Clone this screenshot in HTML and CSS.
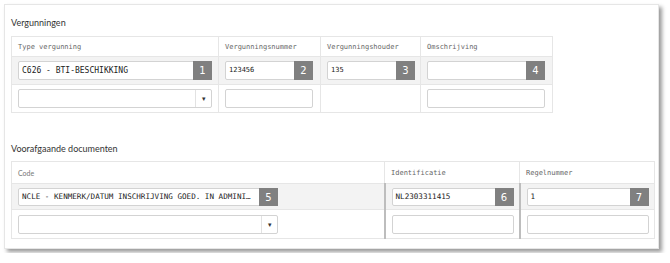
FILE: index.html
```html
<!DOCTYPE html>
<html>
    <head>
        <title>Vergunningen</title>
        <link rel="stylesheet" href="styles.css">
    </head>
    <body>
        <div class="card">
            <div class="section-title">Vergunningen</div>
            <table class="grid permits">
                <colgroup>
                    <col class="c-type">
                    <col class="c-num">
                    <col class="c-holder">
                    <col class="c-desc">
                </colgroup>
                <tr class="head">
                    <th>Type vergunning</th>
                    <th>Vergunningsnummer</th>
                    <th>Vergunningshouder</th>
                    <th>Omschrijving</th>
                </tr>
                <tr class="filled">
                    <td><div class="field w-type"><span class="value big">C626 - BTI-BESCHIKKING</span><span class="badge">1</span></div></td>
                    <td><div class="field w-num"><span class="value">123456</span><span class="badge">2</span></div></td>
                    <td><div class="field w-num"><span class="value">135</span><span class="badge">3</span></div></td>
                    <td><div class="field w-desc"><span class="value"></span><span class="badge">4</span></div></td>
                </tr>
                <tr class="empty">
                    <td><div class="field w-type"><span class="value"></span><span class="arrow">&#9662;</span></div></td>
                    <td><div class="field w-num"></div></td>
                    <td></td>
                    <td><div class="field w-desc"></div></td>
                </tr>
            </table>

            <div class="section-title second">Voorafgaande documenten</div>
            <table class="grid documents">
                <colgroup>
                    <col class="c-code">
                    <col class="c-ident">
                    <col class="c-line">
                </colgroup>
                <tr class="head">
                    <th class="sans">Code</th>
                    <th>Identificatie</th>
                    <th>Regelnummer</th>
                </tr>
                <tr class="filled">
                    <td><div class="field w-code"><span class="value">NCLE - KENMERK/DATUM INSCHRIJVING GOED. IN ADMINI…</span><span class="badge">5</span></div></td>
                    <td class="split"><div class="field w-ident"><span class="value">NL2303311415</span><span class="badge">6</span></div></td>
                    <td class="split"><div class="field w-ident"><span class="value">1</span><span class="badge">7</span></div></td>
                </tr>
                <tr class="empty">
                    <td><div class="field w-code"><span class="value"></span><span class="arrow">&#9662;</span></div></td>
                    <td class="split"><div class="field w-ident"></div></td>
                    <td class="split"><div class="field w-ident"></div></td>
                </tr>
            </table>
        </div>
    </body>
</html>
```

FILE: styles.css
```css
body {
    margin: 0;
    padding: 4px;
    background: #ffffff;
    font-family: Lato, 'Open Sans', sans-serif;
    color: #333;
}

.card {
    width: 655px;
    height: 245px;
    box-sizing: border-box;
    padding: 12px 6px 0 6px;
    background: #fff;
    border: 1px solid #e6e6e6;
    box-shadow: 3px 3px 4px rgba(0, 0, 0, 0.4);
}

.section-title {
    font-size: 9px;
    color: #333;
    height: 19px;
}

.section-title.second {
    margin-top: 30px;
    height: 18px;
}

.grid {
    border-collapse: collapse;
    table-layout: fixed;
}

.grid td,
.grid th {
    border: 1px solid #e6e6e6;
    padding: 0 6px;
    vertical-align: middle;
}

.grid th {
    font-family: 'DejaVu Sans Mono', monospace;
    font-weight: normal;
    font-size: 7px;
    color: #666;
    text-align: left;
}

.grid th.sans {
    font-family: Lato, sans-serif;
    color: #777;
}

.permits {
    width: 541px;
}

.permits .head { height: 20px; }
.permits .filled { height: 28px; }
.permits .empty { height: 28px; }

.c-type { width: 207px; }
.c-num { width: 102px; }
.c-holder { width: 100px; }
.c-desc { width: 132px; }

.documents {
    width: 643px;
}

.documents .head { height: 22px; }
.documents .filled { height: 26px; }
.documents .empty { height: 29px; }

.c-code { width: 373px; }
.c-ident { width: 135px; }
.c-line { width: 135px; }

.grid .filled td {
    background: #f3f3f3;
}

.grid td.split {
    border-left: 2px solid #bdbdbd;
}

.field {
    display: flex;
    align-items: stretch;
    box-sizing: border-box;
    height: 19px;
    background: #fff;
    border: 1px solid #d3d3d3;
    border-radius: 2px;
}

.documents .filled .field { height: 18px; }

.w-type { width: 194px; }
.w-num { width: 88px; }
.w-desc { width: 118px; }
.w-code { width: 260px; }
.w-ident { width: 122px; }

.value {
    flex: 1;
    min-width: 0;
    padding-left: 3px;
    font-family: 'DejaVu Sans Mono', monospace;
    font-size: 7px;
    line-height: 17px;
    color: #222;
    white-space: nowrap;
    overflow: hidden;
}

.value.big {
    font-size: 8px;
}

.documents .value {
    font-size: 7.6px;
    line-height: 16px;
}

.badge {
    width: 19px;
    margin: -1px -1px -1px 0;
    background: #808080;
    color: #fff;
    font-family: 'DejaVu Sans', sans-serif;
    font-size: 10px;
    text-align: center;
    line-height: 19px;
}

.arrow {
    width: 15px;
    border-left: 1px solid #e2e2e2;
    font-size: 7px;
    color: #333;
    text-align: center;
    line-height: 17px;
}
```
